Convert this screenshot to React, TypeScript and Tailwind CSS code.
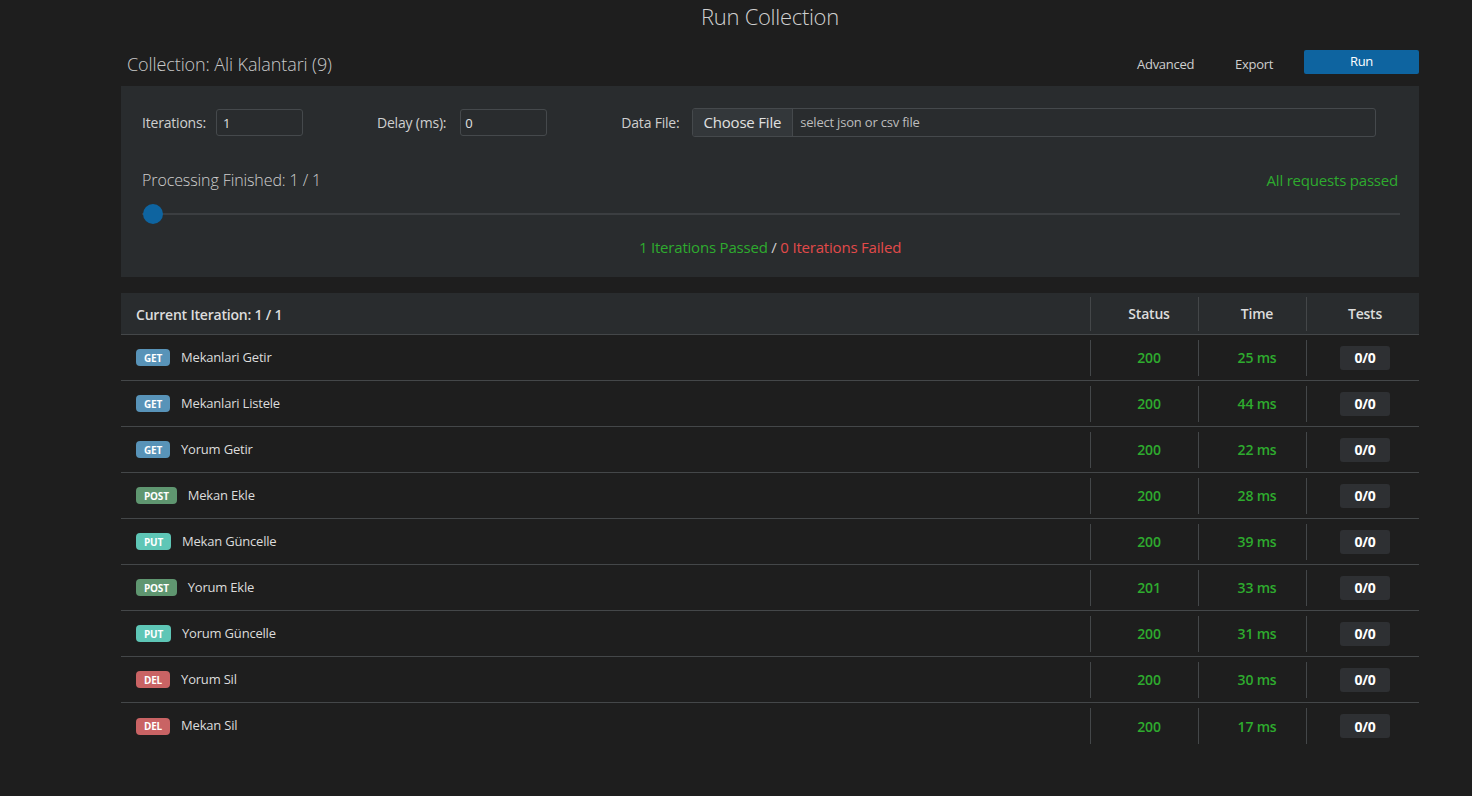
import React from 'react';

type Row = {
  method: 'GET' | 'POST' | 'PUT' | 'DEL';
  name: string;
  status: number;
  time: number;
};

const rows: Row[] = [
  { method: 'GET', name: 'Mekanlari Getir', status: 200, time: 25 },
  { method: 'GET', name: 'Mekanlari Listele', status: 200, time: 44 },
  { method: 'GET', name: 'Yorum Getir', status: 200, time: 22 },
  { method: 'POST', name: 'Mekan Ekle', status: 200, time: 28 },
  { method: 'PUT', name: 'Mekan Güncelle', status: 200, time: 39 },
  { method: 'POST', name: 'Yorum Ekle', status: 201, time: 33 },
  { method: 'PUT', name: 'Yorum Güncelle', status: 200, time: 31 },
  { method: 'DEL', name: 'Yorum Sil', status: 200, time: 30 },
  { method: 'DEL', name: 'Mekan Sil', status: 200, time: 17 },
];

const badgeColors: Record<Row['method'], string> = {
  GET: 'bg-[#5893b8]',
  POST: 'bg-[#5f9670]',
  PUT: 'bg-[#5ec6b6]',
  DEL: 'bg-[#c96364]',
};

const MethodBadge: React.FC<{ method: Row['method'] }> = ({ method }) => (
  <span
    className={`inline-flex h-[17px] items-center rounded-[4px] px-[8px] text-[10px] font-bold leading-none text-white ${badgeColors[method]}`}
  >
    {method}
  </span>
);

const App: React.FC = () => {
  return (
    <div className="min-h-[796px] w-full bg-[#1e1e1e] font-['Open_Sans',sans-serif] text-[#d4d4d4]">
      <div className="ml-[121px] w-[1298px] pb-10">
        {/* Title */}
        <h1 className="pt-[2px] text-center text-[22px] font-light leading-[28px] tracking-[-0.3px] text-[#d0d0d0]">
          Run Collection
        </h1>

        {/* Header row */}
        <div className="mt-[19px] flex h-[37px] items-start justify-between">
          <div className="pl-[6px] pt-[2px] text-[18px] font-light tracking-[-0.1px] text-[#c9c9c9]">
            Collection: Ali Kalantari (9)
          </div>
          <div className="flex items-center">
            <button className="mt-[6px] text-[13px] tracking-[-0.3px] text-[#cfcfcf]">Advanced</button>
            <button className="ml-[41px] mt-[6px] text-[13px] tracking-[-0.3px] text-[#cfcfcf]">Export</button>
            <button className="ml-[31px] h-[24px] w-[115px] rounded-[2px] bg-[#0e64a0] text-[13px] tracking-[-0.3px] text-white">
              Run
            </button>
          </div>
        </div>

        {/* Runner panel */}
        <div className="h-[191px] bg-[#292c2e] px-[21px] pt-[22px]">
          <div className="flex items-center text-[14px] tracking-[-0.2px] text-[#cfcfcf]">
            <label>Iterations:</label>
            <input
              readOnly
              value="1"
              className="ml-[10px] h-[27px] w-[87px] rounded-[3px] border border-[#45494c] bg-[#292c2e] px-[6px] text-[13px] text-[#e0e0e0] outline-none"
            />
            <label className="ml-[74px]">Delay (ms):</label>
            <input
              readOnly
              value="0"
              className="ml-[14px] h-[27px] w-[87px] rounded-[3px] border border-[#45494c] bg-[#292c2e] px-[4px] text-[13px] text-[#e0e0e0] outline-none"
            />
            <label className="ml-[74px]">Data File:</label>
            <div className="ml-[12px] flex h-[29px] w-[684px] overflow-hidden rounded-[3px] border border-[#45494c]">
              <div className="flex items-center bg-[#33373a] px-[11px] text-[15px] tracking-[-0.2px] text-[#e0e0e0]">
                Choose File
              </div>
              <div className="flex items-center border-l border-[#45494c] px-[7px] text-[13px] text-[#bdbdbd]">
                select json or csv file
              </div>
            </div>
          </div>

          <div className="mt-[31px] flex items-center justify-between text-[15px] tracking-[-0.2px]">
            <span className="text-[16px] font-light tracking-[-0.1px] text-[#cfcfcf]">Processing Finished: 1 / 1</span>
            <span className="text-[#2eab2e]">All requests passed</span>
          </div>

          <div className="relative mt-[12px] h-[20px] w-[1258px]">
            <div className="absolute left-0 right-0 top-[9px] h-[2px] bg-[#3b3e41]" />
            <div className="absolute left-[1px] top-[0px] h-[20px] w-[20px] rounded-full bg-[#0e64a0]" />
          </div>

          <div className="mt-[12px] text-center text-[15px] tracking-[-0.2px]">
            <span className="text-[#2eab2e]">1 Iterations Passed</span>
            <span className="text-[#d0d0d0]"> / </span>
            <span className="text-[#e24a4a]">0 Iterations Failed</span>
          </div>
        </div>

        {/* Results table */}
        <div className="mt-[16px]">
          <div className="flex h-[42px] items-center border-b border-[#444749] bg-[#292c2e] text-[14px] font-semibold tracking-[-0.2px] text-[#dcdcdc]">
            <div className="flex-1 pl-[15px] pt-[1px]">Current Iteration: 1 / 1</div>
            <div className="flex h-[34px] w-[108px] items-center justify-center border-l border-[#444749] pl-[9px]">
              Status
            </div>
            <div className="flex h-[34px] w-[108px] items-center justify-center border-l border-[#444749] pl-[9px]">
              Time
            </div>
            <div className="flex h-[34px] w-[113px] items-center justify-center border-l border-[#444749] pl-[4px]">
              Tests
            </div>
          </div>

          {rows.map((row, i) => (
            <div
              key={row.name}
              className={`flex h-[46px] items-center text-[13px] tracking-[-0.2px] ${
                i < rows.length - 1 ? 'border-b border-[#444749]' : ''
              }`}
            >
              <div className="flex flex-1 items-center gap-[11px] pl-[15px] text-[#dcdcdc]">
                <MethodBadge method={row.method} />
                <span>{row.name}</span>
              </div>
              <div className="flex h-[36px] w-[108px] items-center justify-center border-l border-[#444749] pl-[9px] text-[14px] font-semibold text-[#2eab2e]">
                {row.status}
              </div>
              <div className="flex h-[36px] w-[108px] items-center justify-center border-l border-[#444749] pl-[9px] text-[14px] font-semibold text-[#2eab2e]">
                {row.time} ms
              </div>
              <div className="flex h-[36px] w-[113px] items-center justify-center border-l border-[#444749] pl-[4px]">
                <span className="flex h-[24px] w-[50px] items-center justify-center rounded-[3px] bg-[#2e3033] text-[14px] font-bold text-white">
                  0/0
                </span>
              </div>
            </div>
          ))}
        </div>
      </div>
    </div>
  );
};

export default App;
